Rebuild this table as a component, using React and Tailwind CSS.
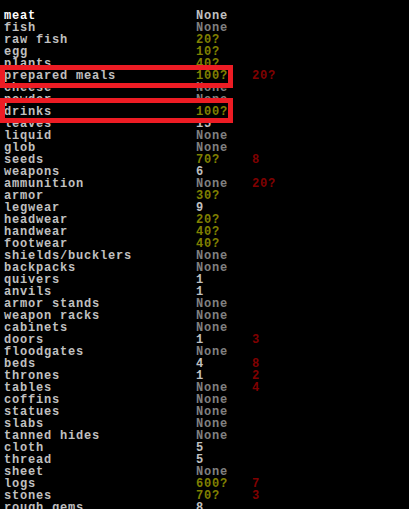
const W = "text-[#c0c0c0]";
const G = "text-[#808080]";
const Y = "text-[#808000]";

const rows = [
  ["meat", "None", "text-[#c0c0c0]", "", "text-white"],
  ["fish", "None", G],
  ["raw fish", "20?", Y],
  ["egg", "10?", Y],
  ["plants", "40?", Y],
  ["prepared meals", "100?", Y, "20?"],
  ["cheese", "None", G],
  ["powder", "None", G],
  ["drinks", "100?", Y],
  ["leaves", "15", W],
  ["liquid", "None", G],
  ["glob", "None", G],
  ["seeds", "70?", Y, "8"],
  ["weapons", "6", W],
  ["ammunition", "None", G, "20?"],
  ["armor", "30?", Y],
  ["legwear", "9", W],
  ["headwear", "20?", Y],
  ["handwear", "40?", Y],
  ["footwear", "40?", Y],
  ["shields/bucklers", "None", G],
  ["backpacks", "None", G],
  ["quivers", "1", W],
  ["anvils", "1", W],
  ["armor stands", "None", G],
  ["weapon racks", "None", G],
  ["cabinets", "None", G],
  ["doors", "1", W, "3"],
  ["floodgates", "None", G],
  ["beds", "4", W, "8"],
  ["thrones", "1", W, "2"],
  ["tables", "None", G, "4"],
  ["coffins", "None", G],
  ["statues", "None", G],
  ["slabs", "None", G],
  ["tanned hides", "None", G],
  ["cloth", "5", W],
  ["thread", "5", W],
  ["sheet", "None", G],
  ["logs", "600?", Y, "7"],
  ["stones", "70?", Y, "3"],
  ["rough gems", "8", W],
];

export default function App() {
  return (
    <div
      className="relative w-[409px] h-[509px] overflow-hidden bg-black pl-[4px] pt-[10px] text-[12px] tracking-[0.8px] leading-[12px] font-bold"
      style={{ fontFamily: '"Liberation Mono", monospace' }}
    >
      {rows.map(([label, val, valColor, extra, labelColor]) => (
        <div key={label} className="grid grid-cols-[192px_56px_auto] h-[12px] whitespace-pre">
          <span className={labelColor || W}>{label}</span>
          <span className={valColor}>{val}</span>
          <span className="text-[#800000]">{extra}</span>
        </div>
      ))}

      <div className="absolute left-0 top-[65px] w-[233px] h-[23px] border-[5px] border-[#ed1c24]" />
      <div className="absolute left-0 top-[98px] w-[233px] h-[25px] border-[5px] border-[#ed1c24]" />
    </div>
  );
}
